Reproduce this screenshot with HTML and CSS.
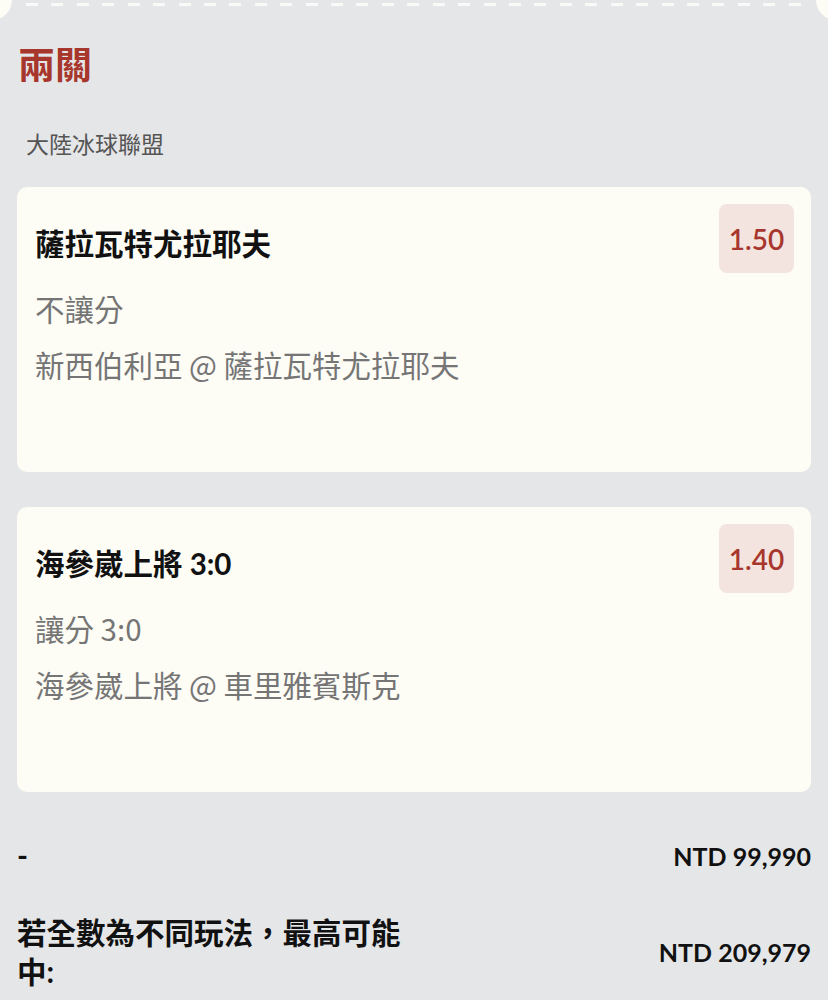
FILE: index.html
```html
<!DOCTYPE html>
<html lang="zh-Hant">
<head>
<meta charset="utf-8">
<link rel="stylesheet" href="styles.css">
</head>
<body>
<div class="panel">
  <div class="dashes">
    <span></span><span></span><span></span><span></span><span></span><span></span><span></span><span></span><span></span><span></span><span></span><span></span><span></span><span></span><span></span><span></span><span></span><span></span><span></span><span></span><span></span><span></span><span></span><span></span><span></span><span></span><span></span><span></span><span></span><span></span><span></span>
  </div>
  <h1 class="title">兩關</h1>
  <div class="league">大陸冰球聯盟</div>

  <div class="card">
    <div class="card-head">
      <div class="pick">薩拉瓦特尤拉耶夫</div>
      <div class="odds">1.50</div>
    </div>
    <div class="meta">不讓分</div>
    <div class="meta">新西伯利亞 @ 薩拉瓦特尤拉耶夫</div>
  </div>

  <div class="card">
    <div class="card-head">
      <div class="pick">海參崴上將 3:0</div>
      <div class="odds">1.40</div>
    </div>
    <div class="meta">讓分 3:0</div>
    <div class="meta">海參崴上將 @ 車里雅賓斯克</div>
  </div>

  <div class="summary-row row-stake">
    <div class="label">-</div>
    <div class="amount">NTD 99,990</div>
  </div>
  <div class="summary-row row-win">
    <div class="label">若全數為不同玩法，最高可能中:</div>
    <div class="amount">NTD 209,979</div>
  </div>
</div>
</body>
</html>
```

FILE: styles.css
```css
html, body {
  margin: 0;
  padding: 0;
}
body {
  background: #e5e6e8;
  font-family: Lato, "Noto Sans CJK TC", sans-serif;
  color: #111;
}
.panel {
  position: relative;
  padding: 0 17px 40px 17px;
  min-height: 1000px;
  box-sizing: border-box;
}
.panel::before,
.panel::after {
  content: "";
  position: absolute;
  top: -20px;
  width: 40px;
  height: 40px;
  border-radius: 50%;
  background: #fdfcf5;
}
.panel::before { left: -28px; }
.panel::after { right: -28px; }

.dashes {
  display: flex;
  justify-content: space-between;
  padding: 3px 10px 0 9px;
  height: 3px;
}
.dashes span {
  width: 12px;
  height: 3px;
  background: #f9f9f7;
}
.title {
  margin: 35px 0 0 1px;
  font-size: 37px;
  line-height: 44px;
  font-weight: 700;
  color: #a7362d;
  font-family: "Noto Sans CJK TC", sans-serif;
}
.league {
  margin: 43px 0 0 9px;
  font-size: 23px;
  line-height: 30px;
  color: #555;
  font-family: "Noto Sans CJK TC", sans-serif;
}
.card {
  margin-top: 29px;
  background: #fdfcf5;
  border-radius: 10px;
  padding: 17px 17px 80px 18px;
}
.card + .card {
  margin-top: 35px;
}
.card-head {
  display: flex;
  align-items: center;
  justify-content: space-between;
  height: 69px;
}
.pick {
  font-size: 29.5px;
  font-weight: 700;
  color: #111;
  padding-top: 6px;
}
.odds {
  width: 75px;
  height: 69px;
  border-radius: 8px;
  background: #f3e4df;
  color: #a7362d;
  font-size: 28px;
  font-weight: 600;
  display: flex;
  align-items: center;
  justify-content: center;
}
.meta {
  font-size: 29.5px;
  line-height: 56px;
  color: #757575;
  font-family: "Noto Sans CJK TC", sans-serif;
}
.card-head + .meta {
  margin-top: 7px;
}
.summary-row {
  display: flex;
  justify-content: space-between;
  align-items: center;
}
.row-stake {
  margin-top: 44px;
}
.row-win {
  margin-top: 38px;
}
.label {
  font-size: 29.5px;
  font-weight: 700;
  line-height: 39px;
  max-width: 400px;
}
.amount {
  font-size: 25px;
  font-weight: 700;
}
```
